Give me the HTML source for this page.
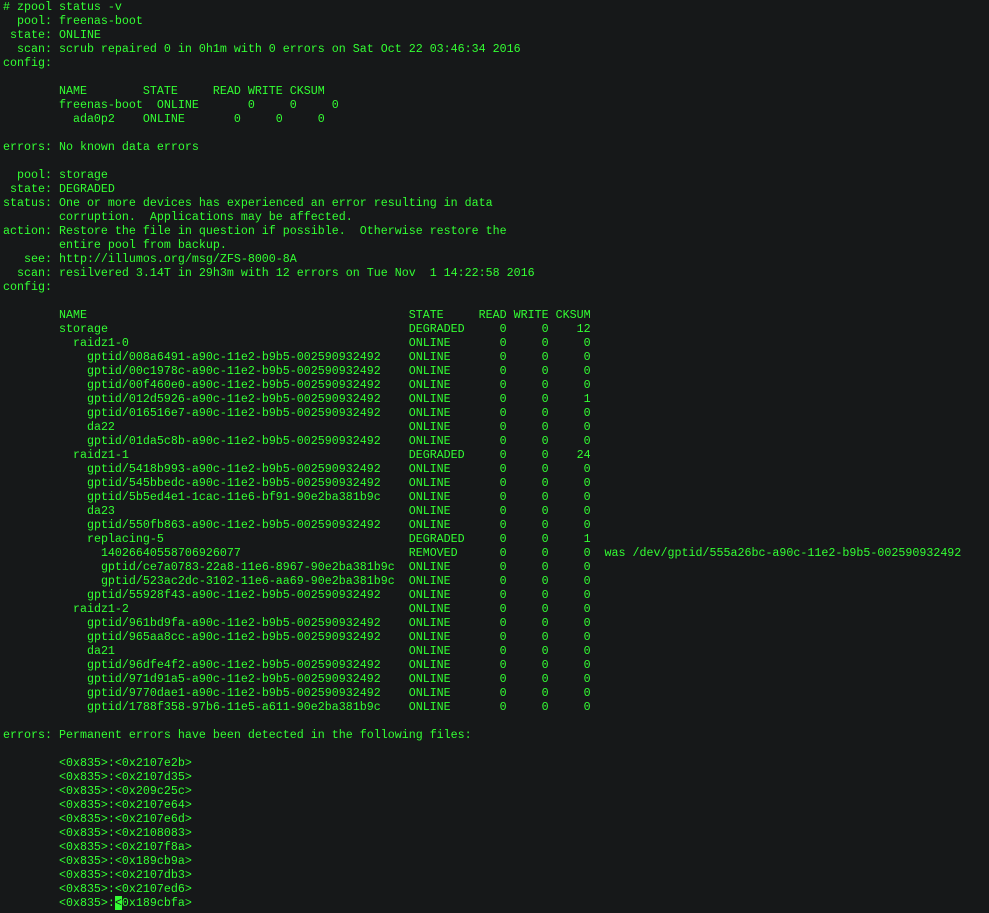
<!DOCTYPE html>
<html><head><meta charset="utf-8"><style>
html,body{margin:0;padding:0;background:#161819;width:989px;height:913px;overflow:hidden}
pre{margin:0;padding:0 0 0 3px;font-family:"Liberation Mono",monospace;font-size:11.67px;line-height:14px;color:#33ff33;white-space:pre}
.n{display:inline-block;width:50ch}
.c{background:#33ff33;color:#161819}
</style></head><body><pre># zpool status -v
  pool: freenas-boot
 state: ONLINE
  scan: scrub repaired 0 in 0h1m with 0 errors on Sat Oct 22 03:46:34 2016
config:

        NAME        STATE     READ WRITE CKSUM
        freenas-boot  ONLINE       0     0     0
          ada0p2    ONLINE       0     0     0

errors: No known data errors

  pool: storage
 state: DEGRADED
status: One or more devices has experienced an error resulting in data
        corruption.  Applications may be affected.
action: Restore the file in question if possible.  Otherwise restore the
        entire pool from backup.
   see: http://illumos.org/msg/ZFS-8000-8A
  scan: resilvered 3.14T in 29h3m with 12 errors on Tue Nov  1 14:22:58 2016
config:

        <span class="n">NAME</span>STATE     READ WRITE CKSUM
        <span class="n">storage</span>DEGRADED     0     0    12
        <span class="n">  raidz1-0</span>ONLINE       0     0     0
        <span class="n">    gptid/008a6491-a90c-11e2-b9b5-002590932492</span>ONLINE       0     0     0
        <span class="n">    gptid/00c1978c-a90c-11e2-b9b5-002590932492</span>ONLINE       0     0     0
        <span class="n">    gptid/00f460e0-a90c-11e2-b9b5-002590932492</span>ONLINE       0     0     0
        <span class="n">    gptid/012d5926-a90c-11e2-b9b5-002590932492</span>ONLINE       0     0     1
        <span class="n">    gptid/016516e7-a90c-11e2-b9b5-002590932492</span>ONLINE       0     0     0
        <span class="n">    da22</span>ONLINE       0     0     0
        <span class="n">    gptid/01da5c8b-a90c-11e2-b9b5-002590932492</span>ONLINE       0     0     0
        <span class="n">  raidz1-1</span>DEGRADED     0     0    24
        <span class="n">    gptid/5418b993-a90c-11e2-b9b5-002590932492</span>ONLINE       0     0     0
        <span class="n">    gptid/545bbedc-a90c-11e2-b9b5-002590932492</span>ONLINE       0     0     0
        <span class="n">    gptid/5b5ed4e1-1cac-11e6-bf91-90e2ba381b9c</span>ONLINE       0     0     0
        <span class="n">    da23</span>ONLINE       0     0     0
        <span class="n">    gptid/550fb863-a90c-11e2-b9b5-002590932492</span>ONLINE       0     0     0
        <span class="n">    replacing-5</span>DEGRADED     0     0     1
        <span class="n">      14026640558706926077</span>REMOVED      0     0     0  was /dev/gptid/555a26bc-a90c-11e2-b9b5-002590932492
        <span class="n">      gptid/ce7a0783-22a8-11e6-8967-90e2ba381b9c</span>ONLINE       0     0     0
        <span class="n">      gptid/523ac2dc-3102-11e6-aa69-90e2ba381b9c</span>ONLINE       0     0     0
        <span class="n">    gptid/55928f43-a90c-11e2-b9b5-002590932492</span>ONLINE       0     0     0
        <span class="n">  raidz1-2</span>ONLINE       0     0     0
        <span class="n">    gptid/961bd9fa-a90c-11e2-b9b5-002590932492</span>ONLINE       0     0     0
        <span class="n">    gptid/965aa8cc-a90c-11e2-b9b5-002590932492</span>ONLINE       0     0     0
        <span class="n">    da21</span>ONLINE       0     0     0
        <span class="n">    gptid/96dfe4f2-a90c-11e2-b9b5-002590932492</span>ONLINE       0     0     0
        <span class="n">    gptid/971d91a5-a90c-11e2-b9b5-002590932492</span>ONLINE       0     0     0
        <span class="n">    gptid/9770dae1-a90c-11e2-b9b5-002590932492</span>ONLINE       0     0     0
        <span class="n">    gptid/1788f358-97b6-11e5-a611-90e2ba381b9c</span>ONLINE       0     0     0

errors: Permanent errors have been detected in the following files:

        &lt;0x835&gt;:&lt;0x2107e2b&gt;
        &lt;0x835&gt;:&lt;0x2107d35&gt;
        &lt;0x835&gt;:&lt;0x209c25c&gt;
        &lt;0x835&gt;:&lt;0x2107e64&gt;
        &lt;0x835&gt;:&lt;0x2107e6d&gt;
        &lt;0x835&gt;:&lt;0x2108083&gt;
        &lt;0x835&gt;:&lt;0x2107f8a&gt;
        &lt;0x835&gt;:&lt;0x189cb9a&gt;
        &lt;0x835&gt;:&lt;0x2107db3&gt;
        &lt;0x835&gt;:&lt;0x2107ed6&gt;
        &lt;0x835&gt;:<span class="c">&lt;</span>0x189cbfa&gt;</pre></body></html>
